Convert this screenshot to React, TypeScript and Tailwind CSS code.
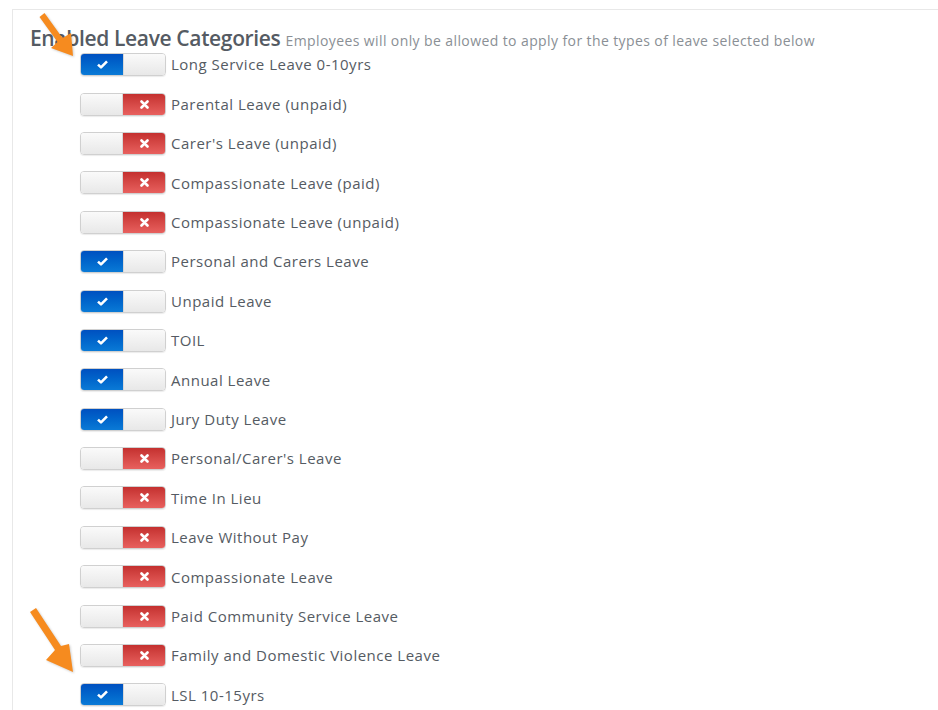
import React from "react";

const categories: { name: string; on: boolean }[] = [
  { name: "Long Service Leave 0-10yrs", on: true },
  { name: "Parental Leave (unpaid)", on: false },
  { name: "Carer's Leave (unpaid)", on: false },
  { name: "Compassionate Leave (paid)", on: false },
  { name: "Compassionate Leave (unpaid)", on: false },
  { name: "Personal and Carers Leave", on: true },
  { name: "Unpaid Leave", on: true },
  { name: "TOIL", on: true },
  { name: "Annual Leave", on: true },
  { name: "Jury Duty Leave", on: true },
  { name: "Personal/Carer's Leave", on: false },
  { name: "Time In Lieu", on: false },
  { name: "Leave Without Pay", on: false },
  { name: "Compassionate Leave", on: false },
  { name: "Paid Community Service Leave", on: false },
  { name: "Family and Domestic Violence Leave", on: false },
  { name: "LSL 10-15yrs", on: true },
];

const Check = () => (
  <svg width="11" height="9" viewBox="0 0 11 9">
    <path d="M1 4.6 L4 7.4 L10 1.4" stroke="white" strokeWidth="2.6" fill="none" strokeLinejoin="round" />
  </svg>
);

const Cross = () => (
  <svg width="9" height="9" viewBox="0 0 9 9">
    <path d="M1.5 1.5 L7.5 7.5 M7.5 1.5 L1.5 7.5" stroke="white" strokeWidth="2.6" strokeLinecap="round" fill="none" />
  </svg>
);

const Toggle = ({ on }: { on: boolean }) => (
  <div className="flex h-[23px] w-[86px] shrink-0 overflow-hidden rounded-[4px] border border-[#d0d0d0] shadow-[0_1px_1px_rgba(0,0,0,0.08)]">
    {on ? (
      <>
        <div className="flex w-[42px] items-center justify-center bg-gradient-to-b from-[#0050c0] to-[#0b7ad6]">
          <Check />
        </div>
        <div className="flex-1 border-l border-[#d8d8d8] bg-gradient-to-b from-[#fafafa] to-[#e8e8e8]" />
      </>
    ) : (
      <>
        <div className="flex-1 border-r border-[#d8d8d8] bg-gradient-to-b from-[#fafafa] to-[#e8e8e8]" />
        <div className="flex w-[42px] items-center justify-center bg-gradient-to-b from-[#c4302f] to-[#e8605e]">
          <Cross />
        </div>
      </>
    )}
  </div>
);

export default function App() {
  return (
    <div className="relative h-[710px] overflow-hidden bg-white pt-[9px]" style={{ fontFamily: "'Open Sans', sans-serif" }}>
      <div className="ml-[12px] h-full border-l border-t border-[#e8e8e8] pl-[17px] pt-[14px]">
        <div className="flex items-baseline gap-[5px] leading-[28px]">
          <h1 className="text-[21px] font-semibold tracking-[-0.35px] text-[#555b63]">Enabled Leave Categories</h1>
          <span className="text-[14px] tracking-[0.4px] text-[#8a8f95]">Employees will only be allowed to apply for the types of leave selected below</span>
        </div>
        <ul className="mt-[-10px] pl-[50px]">
          {categories.map((c) => (
            <li key={c.name} className="flex h-[39.4px] items-center gap-[5px]">
              <Toggle on={c.on} />
              <span className="text-[15px] tracking-[0.5px] text-[#555b63]">{c.name}</span>
            </li>
          ))}
        </ul>
      </div>
      {/* pointer arrows */}
      <svg className="pointer-events-none absolute left-0 top-0 h-[710px] w-[938px]" viewBox="0 0 938 710">
        <g fill="#f68b1f" style={{ filter: "drop-shadow(1px 1px 1px rgba(0,0,0,0.2))" }}>
          <polygon points="39.5,17 44.5,13 62.5,38 71,33 73,56 51,48 57.5,42" />
          <polygon points="30,612 36,608 61,646 69,644 73,672 46,660 55,650" />
        </g>
      </svg>
    </div>
  );
}
